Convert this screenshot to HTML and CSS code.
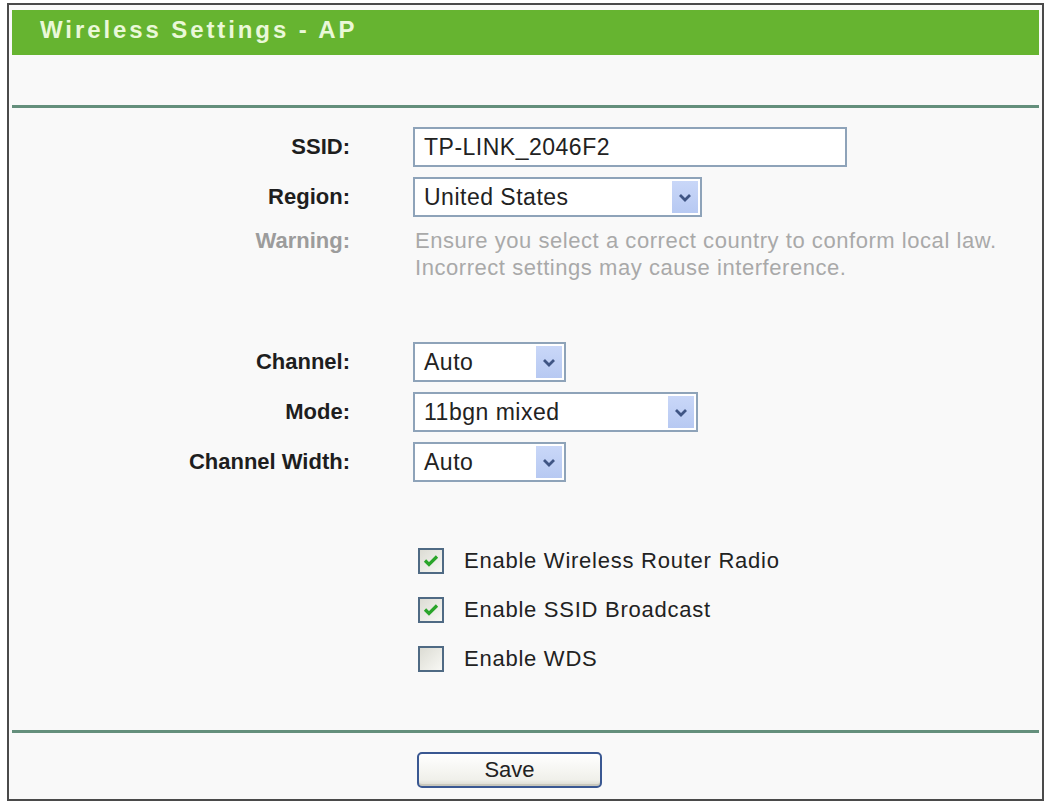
FILE: index.html
```html
<!DOCTYPE html>
<html lang="en">
<head>
  <meta charset="UTF-8" />
  <title>Wireless Settings - AP</title>
  <link rel="stylesheet" href="styles.css">
</head>
<body>
  <div class="frame">
    <div class="title-bar">Wireless Settings - AP</div>
    <div class="spacer"></div>
    <div class="rule"></div>

    <div class="content">
      <div class="group">
        <label class="label">SSID:</label>
        <div class="field"><div class="textbox">TP-LINK_2046F2</div></div>

        <label class="label">Region:</label>
        <div class="field">
          <div class="select region">
            <span class="value">United States</span>
            <span class="arrow"><svg width="14" height="9" viewBox="0 0 14 9"><path d="M2 2 L7 7 L12 2" fill="none" stroke="#3f5584" stroke-width="2.8"/></svg></span>
          </div>
        </div>

        <label class="label muted">Warning:</label>
        <div class="warning">Ensure you select a correct country to conform local law.<br>Incorrect settings may cause interference.</div>
      </div>

      <div class="group radio-group">
        <label class="label">Channel:</label>
        <div class="field">
          <div class="select short">
            <span class="value">Auto</span>
            <span class="arrow"><svg width="14" height="9" viewBox="0 0 14 9"><path d="M2 2 L7 7 L12 2" fill="none" stroke="#3f5584" stroke-width="2.8"/></svg></span>
          </div>
        </div>

        <label class="label">Mode:</label>
        <div class="field">
          <div class="select mode">
            <span class="value">11bgn mixed</span>
            <span class="arrow"><svg width="14" height="9" viewBox="0 0 14 9"><path d="M2 2 L7 7 L12 2" fill="none" stroke="#3f5584" stroke-width="2.8"/></svg></span>
          </div>
        </div>

        <label class="label">Channel Width:</label>
        <div class="field">
          <div class="select short">
            <span class="value">Auto</span>
            <span class="arrow"><svg width="14" height="9" viewBox="0 0 14 9"><path d="M2 2 L7 7 L12 2" fill="none" stroke="#3f5584" stroke-width="2.8"/></svg></span>
          </div>
        </div>
      </div>

      <div class="checks">
        <div class="check-row">
          <span class="checkbox"><svg width="16" height="13" viewBox="0 0 16 13"><path d="M2 6.5 L6 10.5 L14 2.5" fill="none" stroke="#2aa52a" stroke-width="3.2"/></svg></span>
          <span>Enable Wireless Router Radio</span>
        </div>
        <div class="check-row">
          <span class="checkbox"><svg width="16" height="13" viewBox="0 0 16 13"><path d="M2 6.5 L6 10.5 L14 2.5" fill="none" stroke="#2aa52a" stroke-width="3.2"/></svg></span>
          <span>Enable SSID Broadcast</span>
        </div>
        <div class="check-row">
          <span class="checkbox"></span>
          <span>Enable WDS</span>
        </div>
      </div>
    </div>

    <div class="rule"></div>
    <div class="footer">
      <button class="save">Save</button>
    </div>
  </div>
</body>
</html>
```

FILE: styles.css
```css
body {
  font-family: "Liberation Sans", Arial, sans-serif;
  background-color: #ffffff;
  margin: 0;
  padding: 0;
}

.frame {
  box-sizing: border-box;
  height: calc(100vh - 3px);
  margin: 3px 2px 0 7px;
  padding: 5px 3px 0 3px;
  border: 2px solid #4a4a4a;
  background-color: #f9f9f9;
  display: flex;
  flex-direction: column;
}

.title-bar {
  height: 45px;
  box-sizing: border-box;
  padding: 0 0 6px 28px;
  display: flex;
  align-items: center;
  background-color: #66b430;
  color: #eaf8d8;
  font-size: 24px;
  font-weight: bold;
  letter-spacing: 2.9px;
}

.spacer {
  height: 50px;
}

.rule {
  height: 3px;
  background-color: #648f7c;
}

.content {
  flex: 1;
  padding-top: 19px;
}

.group {
  display: grid;
  grid-template-columns: 338px 1fr;
  column-gap: 63px;
  row-gap: 10px;
  align-items: center;
}

.radio-group {
  margin-top: 61px;
}

.label {
  text-align: right;
  font-size: 22px;
  font-weight: bold;
  color: #1e1e1e;
}

.label.muted {
  color: #9c9c9c;
  align-self: start;
  line-height: 27px;
}

.field {
  font-size: 23px;
  color: #222;
  letter-spacing: 0.5px;
}

.textbox {
  box-sizing: border-box;
  width: 434px;
  height: 40px;
  padding: 0 9px;
  display: flex;
  align-items: center;
  background-color: #ffffff;
  border: 2px solid #8ea3b9;
}

.select {
  box-sizing: border-box;
  height: 40px;
  padding: 2px 2px 2px 9px;
  display: flex;
  align-items: center;
  background-color: #ffffff;
  border: 2px solid #8ea3b9;
}

.select .value {
  flex: 1;
}

.select .arrow {
  width: 26px;
  align-self: stretch;
  display: flex;
  align-items: center;
  justify-content: center;
  background: linear-gradient(#c9d7f8, #b7c9f2);
}

.select.region {
  width: 289px;
}

.select.mode {
  width: 285px;
}

.select.short {
  width: 153px;
}

.warning {
  font-size: 22px;
  color: #a9a9a9;
  line-height: 27px;
  letter-spacing: 0.55px;
  margin-left: 2px;
}

.checks {
  display: flex;
  flex-direction: column;
  align-items: flex-start;
  gap: 10px;
  margin-top: 59px;
  padding-left: 406px;
}

.check-row {
  height: 39px;
  display: flex;
  align-items: center;
  gap: 20px;
  font-size: 22px;
  color: #222;
  letter-spacing: 0.75px;
}

.checkbox {
  box-sizing: border-box;
  width: 26px;
  height: 26px;
  display: flex;
  align-items: center;
  justify-content: center;
  border: 2px solid #4f6a84;
  background: linear-gradient(135deg, #dcdcd4, #f8f8f4);
}

.footer {
  height: 66px;
  box-sizing: border-box;
  padding: 19px 0 0 405px;
}

.save {
  width: 185px;
  height: 36px;
  font-family: "Liberation Sans", Arial, sans-serif;
  font-size: 22px;
  color: #222;
  border: 2px solid #3a5892;
  border-radius: 5px;
  background: linear-gradient(#ffffff, #f0f0ea 80%, #d9d8cf);
  box-shadow: inset 0 -2px 0 #c9c8bd;
  cursor: pointer;
}
```
